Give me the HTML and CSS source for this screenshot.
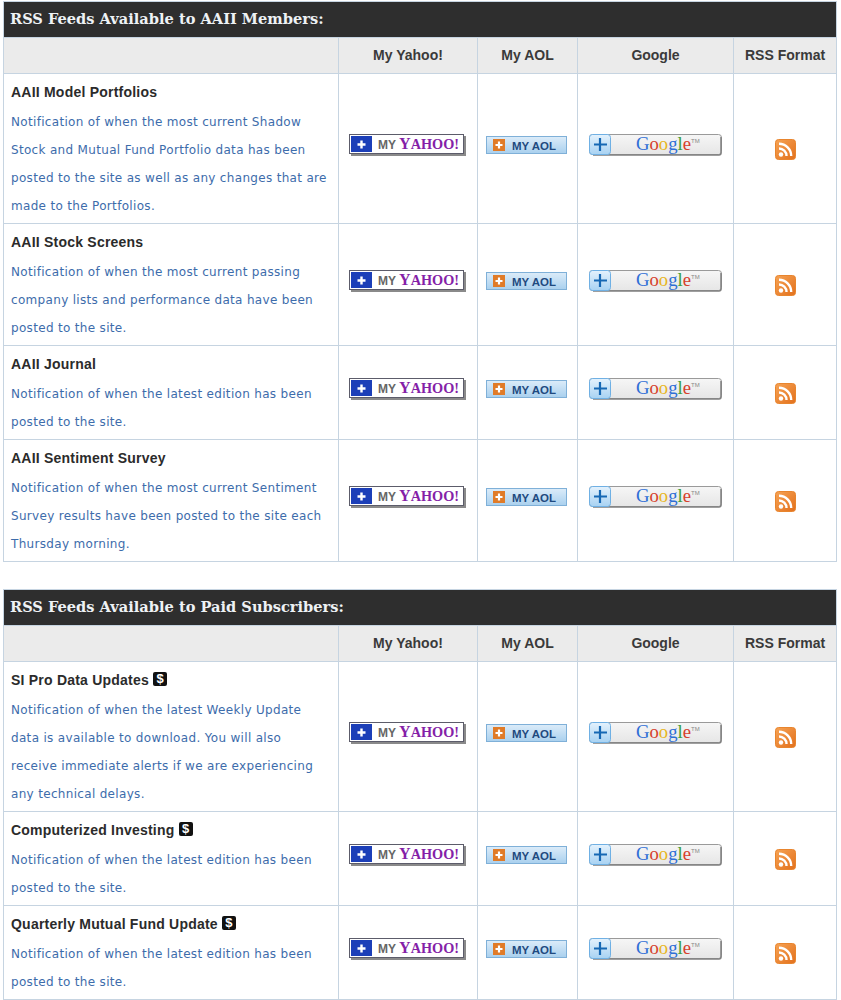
FILE: index.html
```html
<!DOCTYPE html>
<html lang="en">
<head>
<meta charset="utf-8">
<title>RSS Feeds</title>
<link rel="stylesheet" href="styles.css">
</head>
<body>
<svg class="defs" aria-hidden="true">
  <defs>
    <linearGradient id="aolbg" x1="0" y1="0" x2="0" y2="1"><stop offset="0" stop-color="#dcecf9"/><stop offset="1" stop-color="#a9d0ee"/></linearGradient>
    <linearGradient id="googbg" x1="0" y1="0" x2="0" y2="1"><stop offset="0" stop-color="#f6f6f6"/><stop offset="1" stop-color="#e6e6e6"/></linearGradient>
    <linearGradient id="goobtn" x1="0" y1="0" x2="0" y2="1"><stop offset="0" stop-color="#e4f2fd"/><stop offset="1" stop-color="#a8d2f2"/></linearGradient>
    <linearGradient id="rssbg" x1="0" y1="0" x2="1" y2="1"><stop offset="0" stop-color="#f6a354"/><stop offset="1" stop-color="#e2701c"/></linearGradient>
  </defs>
  <symbol id="yahoo" viewBox="0 0 117 22">
    <rect x="2" y="2" width="115" height="20" fill="#8a8a8a"/>
    <rect x="0.5" y="0.5" width="114" height="19" fill="#fff" stroke="#5c5c6a"/>
    <rect x="2" y="2" width="21" height="16" fill="#1c3fb8"/>
    <path d="M12.5 6.5v8M8.5 10.5h8" stroke="#fff" stroke-width="2.4"/>
  </symbol>
  <symbol id="aol" viewBox="0 0 81 18">
    <rect x="0.5" y="0.5" width="80" height="17" fill="url(#aolbg)" stroke="#7fb0d8"/>
    <rect x="7" y="3" width="12" height="12" fill="#e07b28"/>
    <path d="M13 5.5v7M9.5 9h7" stroke="#fff" stroke-width="2.2"/>
  </symbol>
  <symbol id="google" viewBox="0 0 133 22">
    <rect x="0.5" y="0.5" width="132" height="20" rx="3" fill="url(#googbg)" stroke="#9a9a9a"/>
    <path d="M132 3v16q0 2-2 2H4" fill="none" stroke="#808080" stroke-width="1.5"/>
    <rect x="0.5" y="0.5" width="21" height="20" rx="3" fill="url(#goobtn)" stroke="#6fb0e4"/>
    <path d="M11 4v13M5 10.5h13" stroke="#1668b4" stroke-width="2.2"/>
  </symbol>
  <symbol id="rss" viewBox="0 0 21 21">
    <rect x="0.5" y="0.5" width="20" height="20" rx="3" fill="url(#rssbg)" stroke="#e8852e"/>
    <circle cx="6" cy="15.5" r="2.2" fill="#fff"/>
    <path d="M4 9.5a7.5 7.5 0 0 1 7.5 7.5M4 4.8a12.2 12.2 0 0 1 12.2 12.2" fill="none" stroke="#fff" stroke-width="2.4"/>
  </symbol>
</svg>

<main class="page">
<table class="feeds">
  <colgroup><col class="c-name"><col class="c-yahoo"><col class="c-aol"><col class="c-google"><col class="c-rss"></colgroup>
  <thead>
    <tr><th colspan="5" class="bar">RSS Feeds Available to AAII Members:</th></tr>
    <tr class="heads"><th></th><th>My Yahoo!</th><th>My AOL</th><th>Google</th><th>RSS Format</th></tr>
  </thead>
  <tbody>
    <tr>
      <td class="info"><div class="name">AAII Model Portfolios</div><p class="desc">Notification of when the most current Shadow<br>Stock and Mutual Fund Portfolio data has been<br>posted to the site as well as any changes that are<br>made to the Portfolios.</p></td>
      <td class="btn"><svg class="i-yahoo"><use href="#yahoo"/><text x="29" y="15" class="y-my">MY</text><text x="50" y="15" class="y-ya" textLength="60" lengthAdjust="spacingAndGlyphs"><tspan class="y-big">Y</tspan>AHOO!</text></svg></td>
      <td class="btn"><svg class="i-aol"><use href="#aol"/><text x="26" y="14" class="a-txt" textLength="44" lengthAdjust="spacingAndGlyphs">MY AOL</text></svg></td>
      <td class="btn"><svg class="i-google"><use href="#google"/><text x="47" y="16" class="g-txt" textLength="55" lengthAdjust="spacingAndGlyphs"><tspan fill="#2f6fd6">G</tspan><tspan fill="#d6402c">o</tspan><tspan fill="#e8b51c">o</tspan><tspan fill="#2f6fd6">g</tspan><tspan fill="#3c9e3c">l</tspan><tspan fill="#d6402c">e</tspan></text><text x="102" y="9" class="g-tm">TM</text></svg></td>
      <td class="feed"><svg class="i-rss"><use href="#rss"/></svg></td>
    </tr>
    <tr>
      <td class="info"><div class="name">AAII Stock Screens</div><p class="desc">Notification of when the most current passing<br>company lists and performance data have been<br>posted to the site.</p></td>
      <td class="btn"><svg class="i-yahoo"><use href="#yahoo"/><text x="29" y="15" class="y-my">MY</text><text x="50" y="15" class="y-ya" textLength="60" lengthAdjust="spacingAndGlyphs"><tspan class="y-big">Y</tspan>AHOO!</text></svg></td>
      <td class="btn"><svg class="i-aol"><use href="#aol"/><text x="26" y="14" class="a-txt" textLength="44" lengthAdjust="spacingAndGlyphs">MY AOL</text></svg></td>
      <td class="btn"><svg class="i-google"><use href="#google"/><text x="47" y="16" class="g-txt" textLength="55" lengthAdjust="spacingAndGlyphs"><tspan fill="#2f6fd6">G</tspan><tspan fill="#d6402c">o</tspan><tspan fill="#e8b51c">o</tspan><tspan fill="#2f6fd6">g</tspan><tspan fill="#3c9e3c">l</tspan><tspan fill="#d6402c">e</tspan></text><text x="102" y="9" class="g-tm">TM</text></svg></td>
      <td class="feed"><svg class="i-rss"><use href="#rss"/></svg></td>
    </tr>
    <tr>
      <td class="info"><div class="name">AAII Journal</div><p class="desc">Notification of when the latest edition has been<br>posted to the site.</p></td>
      <td class="btn"><svg class="i-yahoo"><use href="#yahoo"/><text x="29" y="15" class="y-my">MY</text><text x="50" y="15" class="y-ya" textLength="60" lengthAdjust="spacingAndGlyphs"><tspan class="y-big">Y</tspan>AHOO!</text></svg></td>
      <td class="btn"><svg class="i-aol"><use href="#aol"/><text x="26" y="14" class="a-txt" textLength="44" lengthAdjust="spacingAndGlyphs">MY AOL</text></svg></td>
      <td class="btn"><svg class="i-google"><use href="#google"/><text x="47" y="16" class="g-txt" textLength="55" lengthAdjust="spacingAndGlyphs"><tspan fill="#2f6fd6">G</tspan><tspan fill="#d6402c">o</tspan><tspan fill="#e8b51c">o</tspan><tspan fill="#2f6fd6">g</tspan><tspan fill="#3c9e3c">l</tspan><tspan fill="#d6402c">e</tspan></text><text x="102" y="9" class="g-tm">TM</text></svg></td>
      <td class="feed"><svg class="i-rss"><use href="#rss"/></svg></td>
    </tr>
    <tr>
      <td class="info"><div class="name">AAII Sentiment Survey</div><p class="desc">Notification of when the most current Sentiment<br>Survey results have been posted to the site each<br>Thursday morning.</p></td>
      <td class="btn"><svg class="i-yahoo"><use href="#yahoo"/><text x="29" y="15" class="y-my">MY</text><text x="50" y="15" class="y-ya" textLength="60" lengthAdjust="spacingAndGlyphs"><tspan class="y-big">Y</tspan>AHOO!</text></svg></td>
      <td class="btn"><svg class="i-aol"><use href="#aol"/><text x="26" y="14" class="a-txt" textLength="44" lengthAdjust="spacingAndGlyphs">MY AOL</text></svg></td>
      <td class="btn"><svg class="i-google"><use href="#google"/><text x="47" y="16" class="g-txt" textLength="55" lengthAdjust="spacingAndGlyphs"><tspan fill="#2f6fd6">G</tspan><tspan fill="#d6402c">o</tspan><tspan fill="#e8b51c">o</tspan><tspan fill="#2f6fd6">g</tspan><tspan fill="#3c9e3c">l</tspan><tspan fill="#d6402c">e</tspan></text><text x="102" y="9" class="g-tm">TM</text></svg></td>
      <td class="feed"><svg class="i-rss"><use href="#rss"/></svg></td>
    </tr>
  </tbody>
</table>

<table class="feeds">
  <colgroup><col class="c-name"><col class="c-yahoo"><col class="c-aol"><col class="c-google"><col class="c-rss"></colgroup>
  <thead>
    <tr><th colspan="5" class="bar">RSS Feeds Available to Paid Subscribers:</th></tr>
    <tr class="heads"><th></th><th>My Yahoo!</th><th>My AOL</th><th>Google</th><th>RSS Format</th></tr>
  </thead>
  <tbody>
    <tr>
      <td class="info"><div class="name">SI Pro Data Updates <span class="paid">$</span></div><p class="desc">Notification of when the latest Weekly Update<br>data is available to download. You will also<br>receive immediate alerts if we are experiencing<br>any technical delays.</p></td>
      <td class="btn"><svg class="i-yahoo"><use href="#yahoo"/><text x="29" y="15" class="y-my">MY</text><text x="50" y="15" class="y-ya" textLength="60" lengthAdjust="spacingAndGlyphs"><tspan class="y-big">Y</tspan>AHOO!</text></svg></td>
      <td class="btn"><svg class="i-aol"><use href="#aol"/><text x="26" y="14" class="a-txt" textLength="44" lengthAdjust="spacingAndGlyphs">MY AOL</text></svg></td>
      <td class="btn"><svg class="i-google"><use href="#google"/><text x="47" y="16" class="g-txt" textLength="55" lengthAdjust="spacingAndGlyphs"><tspan fill="#2f6fd6">G</tspan><tspan fill="#d6402c">o</tspan><tspan fill="#e8b51c">o</tspan><tspan fill="#2f6fd6">g</tspan><tspan fill="#3c9e3c">l</tspan><tspan fill="#d6402c">e</tspan></text><text x="102" y="9" class="g-tm">TM</text></svg></td>
      <td class="feed"><svg class="i-rss"><use href="#rss"/></svg></td>
    </tr>
    <tr>
      <td class="info"><div class="name">Computerized Investing <span class="paid">$</span></div><p class="desc">Notification of when the latest edition has been<br>posted to the site.</p></td>
      <td class="btn"><svg class="i-yahoo"><use href="#yahoo"/><text x="29" y="15" class="y-my">MY</text><text x="50" y="15" class="y-ya" textLength="60" lengthAdjust="spacingAndGlyphs"><tspan class="y-big">Y</tspan>AHOO!</text></svg></td>
      <td class="btn"><svg class="i-aol"><use href="#aol"/><text x="26" y="14" class="a-txt" textLength="44" lengthAdjust="spacingAndGlyphs">MY AOL</text></svg></td>
      <td class="btn"><svg class="i-google"><use href="#google"/><text x="47" y="16" class="g-txt" textLength="55" lengthAdjust="spacingAndGlyphs"><tspan fill="#2f6fd6">G</tspan><tspan fill="#d6402c">o</tspan><tspan fill="#e8b51c">o</tspan><tspan fill="#2f6fd6">g</tspan><tspan fill="#3c9e3c">l</tspan><tspan fill="#d6402c">e</tspan></text><text x="102" y="9" class="g-tm">TM</text></svg></td>
      <td class="feed"><svg class="i-rss"><use href="#rss"/></svg></td>
    </tr>
    <tr>
      <td class="info"><div class="name">Quarterly Mutual Fund Update <span class="paid">$</span></div><p class="desc">Notification of when the latest edition has been<br>posted to the site.</p></td>
      <td class="btn"><svg class="i-yahoo"><use href="#yahoo"/><text x="29" y="15" class="y-my">MY</text><text x="50" y="15" class="y-ya" textLength="60" lengthAdjust="spacingAndGlyphs"><tspan class="y-big">Y</tspan>AHOO!</text></svg></td>
      <td class="btn"><svg class="i-aol"><use href="#aol"/><text x="26" y="14" class="a-txt" textLength="44" lengthAdjust="spacingAndGlyphs">MY AOL</text></svg></td>
      <td class="btn"><svg class="i-google"><use href="#google"/><text x="47" y="16" class="g-txt" textLength="55" lengthAdjust="spacingAndGlyphs"><tspan fill="#2f6fd6">G</tspan><tspan fill="#d6402c">o</tspan><tspan fill="#e8b51c">o</tspan><tspan fill="#2f6fd6">g</tspan><tspan fill="#3c9e3c">l</tspan><tspan fill="#d6402c">e</tspan></text><text x="102" y="9" class="g-tm">TM</text></svg></td>
      <td class="feed"><svg class="i-rss"><use href="#rss"/></svg></td>
    </tr>
  </tbody>
</table>
</main>
</body>
</html>
```
FILE: styles.css
```css
html, body { margin: 0; padding: 0; background: #fff; }
.page { padding: 1px 0 0 3px; display: flex; flex-direction: column; gap: 27px; width: 834px; }
.feeds { border-collapse: collapse; table-layout: fixed; width: 833px; }
.c-name { width: 335px; }
.c-yahoo { width: 139px; }
.c-aol { width: 100px; }
.c-google { width: 156px; }
.c-rss { width: 103px; }
.feeds td, .feeds th { border: 1px solid #c6d4e1; padding: 0; }
.feeds .bar {
  background: #2e2e2e; color: #eef2f5; height: 36px; padding: 0 0 2px 6px; text-align: left;
  font: bold 14.6px "DejaVu Serif", serif; box-sizing: border-box;
}
.feeds .heads th {
  height: 36px; box-sizing: border-box; padding-bottom: 2px; text-align: center; color: #3a3a3a;
  font: bold 14px "Liberation Sans", Arial, sans-serif;
  background: repeating-conic-gradient(#e6e6e6 0 25%, #f0f0f0 0 50%) 0 0 / 2px 2px;
}
.feeds .info { padding: 0 0 3px 7px; vertical-align: top; }
.name { padding-top: 9px; margin-bottom: 7px; color: #2b2b2b; font: bold 14px/18px "Liberation Sans", Arial, sans-serif; letter-spacing: 0.22px; }
.desc { margin: 0; color: #3d6cab; font: 12px/28px "DejaVu Sans", Verdana, sans-serif; letter-spacing: 0.32px; white-space: nowrap; }
.paid {
  display: inline-block; width: 14px; height: 14px; background: #111; color: #fff; border-radius: 2px;
  font: bold 13px/14px "Liberation Sans", Arial, sans-serif; letter-spacing: 0; text-align: center; vertical-align: 2px;
}
.feeds .btn, .feeds .feed { text-align: center; vertical-align: middle; }
.feeds .btn { padding-bottom: 8px; }
.feeds .feed { padding-top: 2px; }
svg { display: inline-block; vertical-align: middle; }
svg.defs { display: block; width: 0; height: 0; overflow: hidden; }
.i-yahoo { width: 117px; height: 22px; margin-right: 2px; }
.i-aol { width: 81px; height: 18px; margin-right: 2px; }
.i-google { width: 133px; height: 22px; }
.i-rss { width: 21px; height: 21px; }
.y-my { font: bold 12px "Liberation Sans", Arial, sans-serif; fill: #666; }
.y-ya { font: bold 15px "Liberation Serif", serif; fill: #851fa8; }
.y-big { font-size: 17px; }
.a-txt { font: bold 11px "Liberation Sans", Arial, sans-serif; fill: #1f4a80; }
.g-txt { font: 19px "Liberation Serif", serif; }
.g-tm { font: 6px "Liberation Sans", Arial, sans-serif; fill: #888; }
```
